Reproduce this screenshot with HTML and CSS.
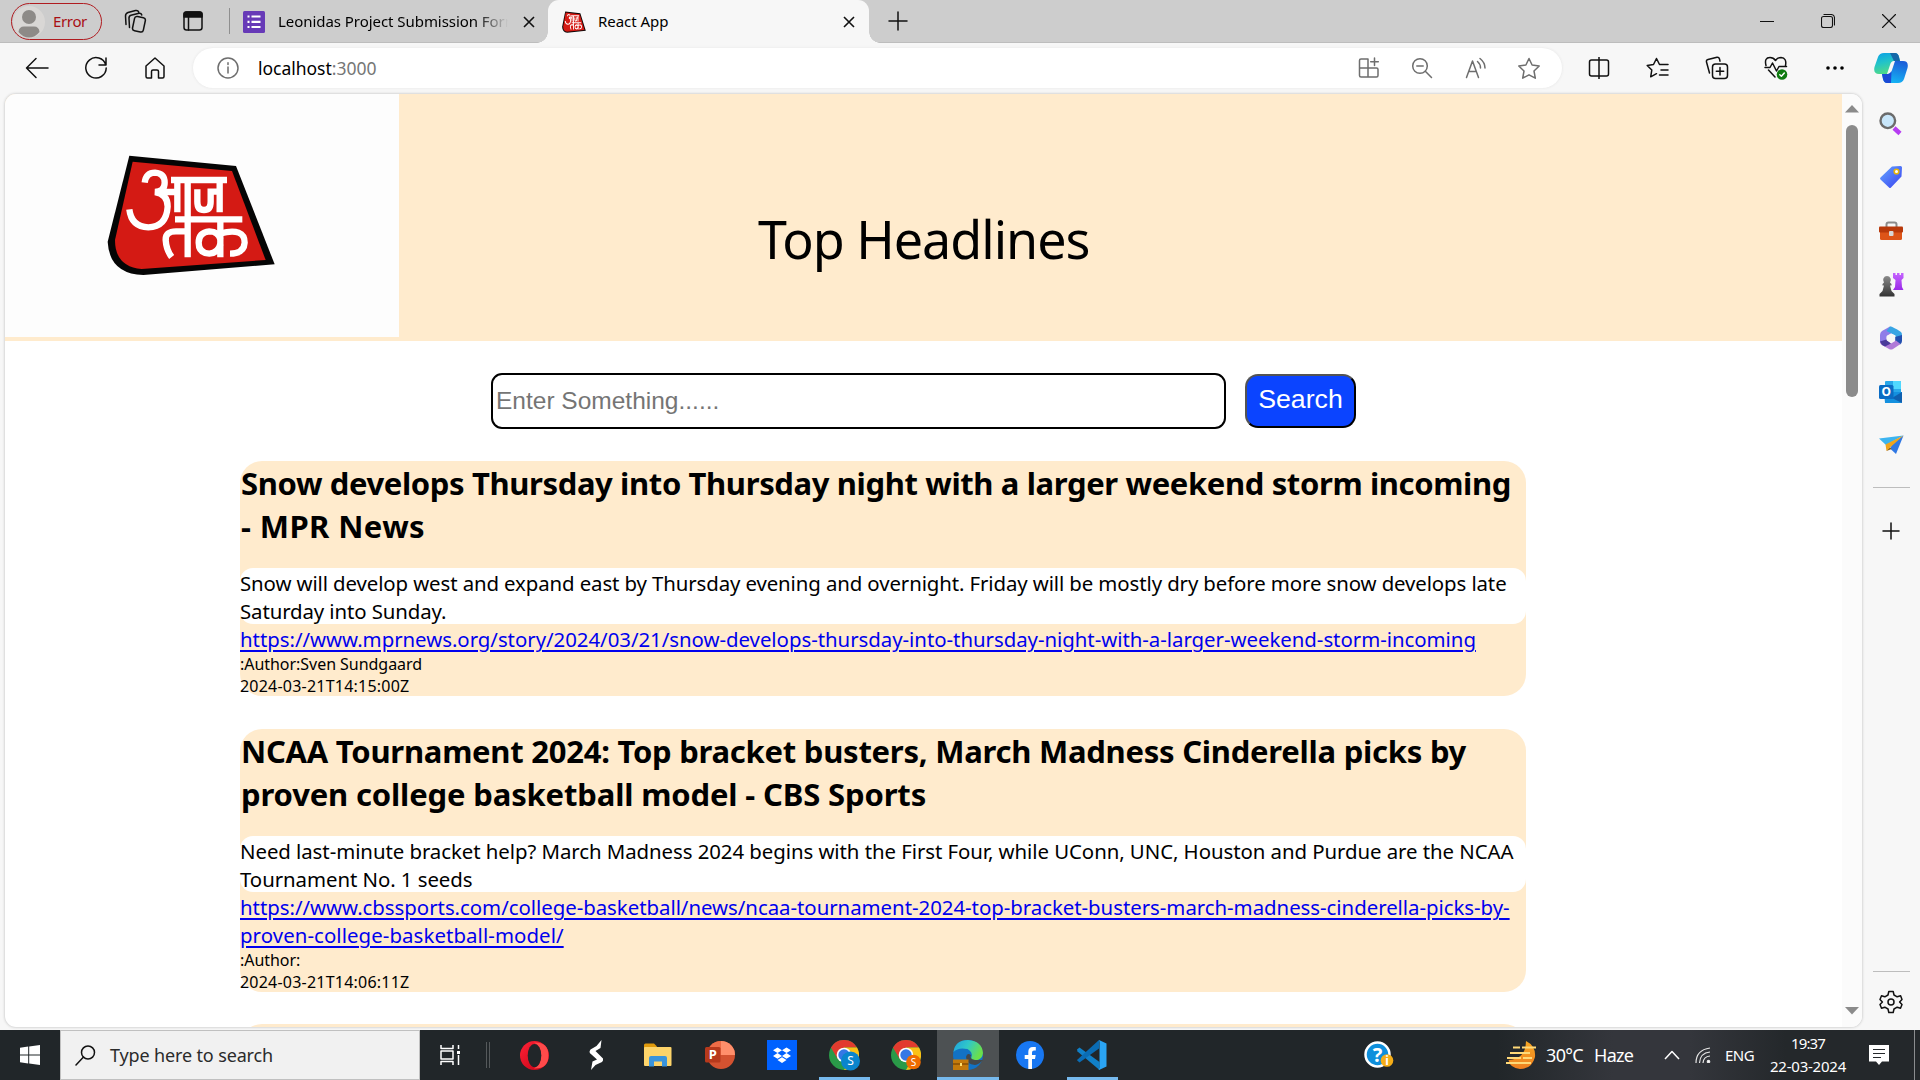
FILE: index.html
```html
<!DOCTYPE html>
<html lang="en">
<head>
<meta charset="utf-8">
<title>React App</title>
<link rel="stylesheet" href="styles.css">
</head>
<body>
<svg class="defs" width="0" height="0" aria-hidden="true">
  <defs>
    <linearGradient id="gBlue" x1="0" y1="0" x2="1" y2="1"><stop offset="0" stop-color="#64a8ff"/><stop offset="1" stop-color="#3a3ff0"/></linearGradient>
    <linearGradient id="gPurple" x1="0" y1="0" x2="0" y2="1"><stop offset="0" stop-color="#c565ff"/><stop offset="1" stop-color="#9b2be8"/></linearGradient>
    <linearGradient id="gGrey" x1="0" y1="0" x2="0" y2="1"><stop offset="0" stop-color="#8a8a8a"/><stop offset="1" stop-color="#333"/></linearGradient>
    <linearGradient id="gCopA" x1="0" y1="0" x2="0.3" y2="1"><stop offset="0" stop-color="#0a9fe8"/><stop offset="0.5" stop-color="#22c3c9"/><stop offset="1" stop-color="#4fd98a"/></linearGradient>
    <linearGradient id="gCopB" x1="0.6" y1="0" x2="0.3" y2="1"><stop offset="0" stop-color="#1b5fd9"/><stop offset="1" stop-color="#15b8f5"/></linearGradient>
    <linearGradient id="gEdge" x1="0" y1="0" x2="1" y2="0.4"><stop offset="0" stop-color="#1e9fe0"/><stop offset="0.5" stop-color="#30c8c8"/><stop offset="1" stop-color="#6be04a"/></linearGradient>
    <linearGradient id="gOpera" x1="0" y1="0" x2="1" y2="1"><stop offset="0" stop-color="#ff2236"/><stop offset="1" stop-color="#c00014"/></linearGradient>
    <linearGradient id="gHaze" x1="0" y1="0" x2="0" y2="1"><stop offset="0" stop-color="#f5a623"/><stop offset="1" stop-color="#f08020"/></linearGradient>
    <symbol id="mark" viewBox="320 190 508 370">
      <path d="M388 197 708 228 824 523 430 555Q328 552 323 455Z" fill="#050505"/>
      <path d="M398 215 696 243 797 510 425 537Q345 530 345 450Z" fill="#d41a14"/>
      <g fill="none" stroke="#fff" stroke-width="19">
        <path d="M434 278Q438 248 465 248 494 250 494 278 494 304 465 306 503 312 503 350 499 411 445 412 394 410 388 358"/>
        <path d="M480 306H532M513 270H681M532 270V367M563 270V502M659 270V367"/>
        <path d="M592 298V335Q592 360 612 360 632 360 632 335V305H659"/>
        <path d="M525 388H727M661 388V502M563 424H528Q496 424 497 450 499 480 515 501"/>
        <path d="M661 448Q655 424 628 424 596 427 596 458 596 489 628 491 655 489 661 462M661 430Q734 412 734 458 732 491 690 491"/>
      </g>
    </symbol>
    <symbol id="chrome" viewBox="0 0 30 30">
      <circle cx="15" cy="15" r="15" fill="#2a9a48"/>
      <path d="M15 15 2 7.5A15 15 0 0 1 28 7.5H15Z" fill="#e23b2e"/>
      <path d="M28 7.5A15 15 0 0 1 15 30L21.5 18.5 15 7.5Z" fill="#fbc116"/>
      <path d="M2 7.500 8.500 18.700 15 15 15 7.500Z" fill="#e23b2e"/>
      <circle cx="15" cy="15" r="7.300" fill="#fff"/><circle cx="15" cy="15" r="5.700" fill="#3578e5"/>
    </symbol>
  </defs>
</svg>

<header class="strip">
  <div class="profile">
    <svg width="34" height="34" viewBox="0 0 34 34"><circle cx="17" cy="17" r="16" fill="#d9d7d5"/><circle cx="17" cy="12" r="7" fill="#8d8a87"/><path d="M6.500 27Q7 21.500 12 21.500H22Q27 21.500 27.500 27 23 32.500 17 32.500T6.500 27Z" fill="#8d8a87"/></svg>
    <span class="profile-name">Error</span>
  </div>
  <div class="cell cell-spaces"><svg width="24" height="24" viewBox="0 0 24 24" class="ln"><rect x="9.500" y="8" width="11" height="14.500" rx="2.500" transform="rotate(12 15 15)"/><path d="M5.500 18.500 5 9.500Q4.800 7 7 6.300L15 4.300Q17.200 4 17.800 6M2 15.500 1.500 7Q1.500 4.500 4 3.500L11.500 1.500Q14 1 14.700 3"/></svg></div>
  <div class="cell cell-tabs"><svg width="20" height="20" viewBox="0 0 20 20" class="ln"><rect x="1" y="1" width="18" height="18" rx="2.500"/><path d="M1 3.500Q1 1 3.500 1H16.500Q19 1 19 3.500V6H1Z" fill="#111"/><path d="M5.500 6V19"/></svg></div>
  <i class="strip-sep"></i>
  <div class="tab">
    <svg width="22" height="22" viewBox="0 0 22 22"><rect width="22" height="22" rx="1.500" fill="#673ab7"/><path d="M4.500 5.500h2M4.500 10.800h2M4.500 16h2M8.500 5.500h9M8.500 10.800h9M8.500 16h9" stroke="#fff" stroke-width="2.200"/></svg>
    <span class="tab-title tab-title-fade">Leonidas Project Submission Form</span>
    <svg class="tab-x" width="12" height="12" viewBox="0 0 12 12"><path d="M1 1 11 11M11 1 1 11"/></svg>
  </div>
  <div class="tab tab-active">
    <svg class="favicon" width="24" height="22" viewBox="320 190 508 370" preserveAspectRatio="none"><use href="#mark" x="320" y="190" width="508" height="370"/></svg>
    <span class="tab-title">React App</span>
    <svg class="tab-x" width="12" height="12" viewBox="0 0 12 12"><path d="M1 1 11 11M11 1 1 11"/></svg>
  </div>
  <div class="cell cell-new"><svg width="20" height="20" viewBox="0 0 20 20" class="ln"><path d="M10 1V19M1 10H19"/></svg></div>
  <div class="window-buttons">
    <div class="cell"><svg width="14" height="14" viewBox="0 0 14 14" class="ln thin"><path d="M0 7.500H14"/></svg></div>
    <div class="cell"><svg width="14" height="14" viewBox="0 0 14 14" class="ln thin"><rect x=".5" y="2.500" width="11" height="11" rx="2"/><path d="M3 .5H10Q13.500 .5 13.500 4V11"/></svg></div>
    <div class="cell"><svg width="14" height="14" viewBox="0 0 14 14" class="ln thin"><path d="M.5 .5 13.500 13.500M13.500 .5 .5 13.500"/></svg></div>
  </div>
</header>

<nav class="toolbar">
  <div class="cell nav-cell"><svg width="24" height="22" viewBox="0 0 24 22" class="ln"><path d="M11 1.500 1.500 11 11 20.500M1.500 11H23"/></svg></div>
  <div class="cell nav-cell"><svg width="24" height="24" viewBox="0 0 24 24" class="ln"><path d="M21.800 9A10.200 10.200 0 1 0 22.200 12M22 2V9H15"/></svg></div>
  <div class="cell nav-cell"><svg width="22" height="24" viewBox="0 0 22 24" class="ln"><path d="M2 10 11 2 20 10V20.500Q20 22 18.500 22H14.500V15.500Q14.500 14 13 14H9Q7.500 14 7.500 15.500V22H3.500Q2 22 2 20.500Z"/></svg></div>
  <div class="address">
    <svg width="22" height="22" viewBox="0 0 22 22" class="ln grey"><circle cx="11" cy="11" r="10"/><path d="M11 10V16M11 5.800V7.600"/></svg>
    <span class="url">localhost<span class="port">:3000</span></span>
    <div class="address-icons">
      <div class="cell"><svg width="22" height="22" viewBox="0 0 22 22" class="ln grey"><path d="M3 2H10V20H3Q1.500 20 1.500 18.500V3.500Q1.500 2 3 2ZM1.500 11H18.500Q20 11 20 12.500V18.500Q20 20 18.500 20H10M16.500 1V8.500M12.700 4.700H20.300"/></svg></div>
      <div class="cell"><svg width="22" height="22" viewBox="0 0 22 22" class="ln grey"><circle cx="9" cy="9" r="7.300"/><path d="M14.300 14.300 20.500 20.500M5.800 9H12.200"/></svg></div>
      <div class="cell"><svg width="22" height="22" viewBox="0 0 22 22" class="ln grey"><path d="M1.500 20.500 7.500 4 13.500 20.500M3.700 14.500H11.300M12.500 4.500Q15.500 7 15.500 11M15 1.500Q20 5.500 20 11"/></svg></div>
      <div class="cell"><svg width="24" height="23" viewBox="0 0 24 23" class="ln grey"><path d="M12 1.500 15.100 8 22.200 9 17 14 18.300 21.200 12 17.800 5.700 21.200 7 14 1.800 9 8.900 8Z"/></svg></div>
    </div>
  </div>
  <div class="cell act-cell first"><svg width="22" height="22" viewBox="0 0 22 22" class="ln"><path d="M8.500 3H3.500Q1.500 3 1.500 5V17Q1.500 19 3.500 19H8.500M13.500 3H18.500Q20.500 3 20.500 5V17Q20.500 19 18.500 19H13.500M11 0V22M8.500 3H13.500M8.500 19H13.500"/></svg></div>
  <div class="cell act-cell"><svg width="24" height="22" viewBox="0 0 24 22" class="ln"><path d="M13.500 7.500 10.500 1.500 7.500 7.500 1.200 8.500 5.800 13 4.700 19.800 10.500 16.700M13.500 7.500H22M15 13H22M13.500 18H22"/></svg></div>
  <div class="cell act-cell"><svg width="24" height="24" viewBox="0 0 24 24" class="ln"><rect x="7.500" y="8" width="15" height="14.500" rx="3"/><path d="M15 11.500V19M11.300 15.300H18.700M4.500 17 1.500 6Q1 4 3 3.500L12 1.200Q14 1 14.500 3L15 5.200"/></svg></div>
  <div class="cell act-cell"><svg width="24" height="24" viewBox="0 0 24 24" class="ln"><path d="M2 9.500Q0 1.500 6 1.500 9.500 1.500 11.500 4.500 13.500 1.500 17 1.500 23 2 21.500 9.500M1 11.500H6L8.500 7 12.500 15 15 10.500H22.500M4.500 14 11 21"/><circle cx="18" cy="18.500" r="5.300" fill="#0f7b10" stroke="none"/><path d="M15.800 18.700 17.400 20.200 20.300 17" stroke="#fff"/></svg></div>
  <div class="cell act-cell"><svg width="20" height="6" viewBox="0 0 20 6"><circle cx="3" cy="3" r="1.800"/><circle cx="10" cy="3" r="1.800"/><circle cx="17" cy="3" r="1.800"/></svg></div>
  <div class="cell copilot"><svg width="34" height="30" viewBox="0 0 34 30"><path d="M10 0H21Q24 0 25 4L26 8H20Q17 8 16 12L13 21H5Q-1 21 .5 14L4 4Q5.500 0 10 0Z" fill="url(#gCopA)"/><path d="M16 0H21Q24 0 25 4L26 8H20Z" fill="#1568a8"/><path d="M24 30H13Q10 30 9 26L8 21H14Q17 21 18 17L21 8H29Q35 8 33.500 15L30 26Q28.500 30 24 30Z" fill="url(#gCopB)"/><path d="M8 21H14Q16 21 17.500 18L17 30H13Q10 30 9 26Z" fill="#1c49d4"/></svg></div>
</nav>

<div class="middle">
  <main class="page">
    <div class="content">
      <section class="banner">
        <svg class="logo" width="394" height="243" viewBox="15 12 1182 729"><rect x="15" y="12" width="1182" height="729" fill="#fdfdfd"/><use href="#mark" x="320" y="190" width="508" height="370"/></svg>
        <h1 class="banner-title">Top Headlines</h1>
      </section>
      <div class="search">
        <input class="search-field" type="text" placeholder="Enter Something......">
        <button class="search-button">Search</button>
      </div>
      <article class="card">
        <h2 class="card-title"><span class="t1">Snow develops Thursday into Thursday night with a larger weekend storm incoming</span><br><span class="t4">- MPR News</span></h2>
        <p class="card-text tight">Snow will develop west and expand east by Thursday evening and overnight. Friday will be mostly dry before more snow develops late<br>Saturday into Sunday.</p>
        <a class="card-link" href="#">https://www.mprnews.org/story/2024/03/21/snow-develops-thursday-into-thursday-night-with-a-larger-weekend-storm-incoming</a>
        <div class="card-meta">:Author:Sven Sundgaard<br><span class="date">2024-03-21T14:15:00Z</span></div>
      </article>
      <article class="card card-second">
        <h2 class="card-title"><span class="t3">NCAA Tournament 2024: Top bracket busters, March Madness Cinderella picks by</span><br><span class="t2">proven college basketball model - CBS Sports</span></h2>
        <p class="card-text">Need last-minute bracket help? March Madness 2024 begins with the First Four, while UConn, UNC, Houston and Purdue are the NCAA<br>Tournament No. 1 seeds</p>
        <a class="card-link" href="#">https://www.cbssports.com/college-basketball/news/ncaa-tournament-2024-top-bracket-busters-march-madness-cinderella-picks-by-<br><span class="link-tail">proven-college-basketball-model/</span></a>
        <div class="card-meta">:Author:<br><span class="date">2024-03-21T14:06:11Z</span></div>
      </article>
      <article class="card card-third"></article>
    </div>
    <div class="scrollbar">
      <svg width="14" height="8" viewBox="0 0 14 8"><path d="M7 0 14 7.500H0Z" fill="#8b8b8b"/></svg>
      <i class="thumb"></i>
      <svg width="14" height="8" viewBox="0 0 14 8"><path d="M7 7.500 14 0H0Z" fill="#8b8b8b"/></svg>
    </div>
  </main>
  <aside class="side">
    <div class="side-cell"><svg width="24" height="24" viewBox="0 0 24 24"><path d="M15 16 21 21.500" stroke="#b63df2" stroke-width="4.500"/><circle cx="8.800" cy="8.800" r="7.300" fill="#c8e6fa" stroke="#6b6b6b" stroke-width="2.400"/></svg></div>
    <div class="side-cell"><svg width="24" height="24" viewBox="0 0 24 24"><path d="M13 1.500 21.500 1Q23 1 23 2.500L22.500 11.500 12 22.500Q11 23.500 10 22.500L1.500 14.500Q.5 13.500 1.500 12.500Z" fill="url(#gBlue)"/><circle cx="17.500" cy="6.500" r="2.300" fill="#fff" stroke="#e8b40a" stroke-width="1.600"/></svg></div>
    <div class="side-cell"><svg width="24" height="20" viewBox="0 0 24 20"><path d="M7.500 6V3.500Q7.500 1.500 9.500 1.500H15.500Q17.500 1.500 17.500 3.500V6" fill="none" stroke="#8b8b8b" stroke-width="2"/><rect x="1" y="9" width="22" height="10" rx="1.500" fill="#dd5418"/><rect y="5.500" width="24" height="6" rx="1" fill="#b8390b"/><rect x="10" y="10" width="4.500" height="5" rx="1" fill="#d8d8d8"/></svg></div>
    <div class="side-cell"><svg width="25" height="25" viewBox="0 0 25 25"><path d="M14 1H16.500V3H18V1H20.500V3H22V1H24.500V6L22.500 8 23 15 24.500 18H14L16 15 16.500 8 14 6Z" fill="url(#gPurple)"/><path d="M8 4A4 4 0 0 1 11 10.500L12.500 12V13.500H11L12.500 19 15.500 22V24.500H.5V22L3.500 19 5 13.500H3.500V12L5 10.500A4 4 0 0 1 8 4Z" fill="url(#gGrey)"/></svg></div>
    <div class="side-cell"><svg width="24" height="24" viewBox="0 0 24 24"><path d="M11 .5 3 5Q1 6.500 1 9V17L7.500 14V10.500L17 4.500Z" fill="#8f7de8"/><path d="M11 .5Q13 0 22 6 23 7 23 9V15L16.500 12V9.500L7.500 5Z" fill="#38a5e4"/><path d="M23 9V15Q23 17.500 21 18.500L16 14.500V11Z" fill="#2350b0"/><path d="M1 16 12 17.500 17 14.500 21.500 18 14 23Q12 24 10 23L3 19Q1 18 1 16Z" fill="#b07ad8"/><path d="M1 15.500 7.500 13.500 12 17.500 6 20.500 3 19Z" fill="#4a3a9a"/><path d="M12 7.500 16.200 9.800V14.500L12 17 7.800 14.500V9.800Z" fill="#f7f7f7"/></svg></div>
    <div class="side-cell"><svg width="24" height="24" viewBox="0 0 24 24"><path d="M6 2Q6 1 7 1H21Q22 1 22 2V14H6Z" fill="#28a8ea"/><path d="M14 1H21Q22 1 22 2V9H14Z" fill="#50d9ff"/><path d="M5 12 23 12V22Q23 23 22 23H6Z" fill="#1490df"/><path d="M23 12 13 18 23 23Z" fill="#0f60b0"/><rect y="5" width="14.500" height="14" rx="1.500" fill="#0a6cc4"/><text x="7.200" y="16.300" text-anchor="middle" class="badge b12">O</text></svg></div>
    <div class="side-cell"><svg width="25" height="20" viewBox="0 0 25 20"><path d="M0 3.500 24.500 .5 7 10Z" fill="#3cb4f0"/><path d="M24.500 .5 17 19 11 13.500 14 8Z" fill="#2f78e4"/><path d="M24.500 .5 6.500 9.500 7.500 16 11 12.500Z" fill="#f0a51c"/><path d="M7.500 16 11 12.500 12.500 14Z" fill="#8a5200"/></svg></div>
    <i class="side-line"></i>
    <svg class="side-plus ln" width="18" height="18" viewBox="0 0 18 18"><path d="M9 1V17M1 9H17"/></svg>
    <div class="side-bottom">
      <i class="side-line"></i>
      <svg width="24" height="24" viewBox="0 0 24 24" class="ln gear"><path d="M9.800 1.500H14.200L15 5 18.200 6.800 21.600 5.800 23 9.500 20.600 12 23 14.500 21.500 18.200 18.200 17.200 15 19 14.200 22.500H9.800L9 19 5.800 17.200 2.500 18.200 1 14.500 3.400 12 1 9.500 2.500 5.800 5.800 6.800 9 5Z"/><circle cx="12" cy="12" r="3"/></svg>
    </div>
  </aside>
</div>

<footer class="taskbar">
  <div class="start"><svg width="20" height="20" viewBox="0 0 20 20" fill="#fff"><path d="M0 2.800 8.200 1.600V9.500H0ZM9.200 1.500 20 0V9.500H9.200ZM0 10.500H8.200V18.400L0 17.200ZM9.200 10.500H20V20L9.200 18.500Z"/></svg></div>
  <div class="task-search"><svg width="21" height="21" viewBox="0 0 21 21" class="ln"><circle cx="13" cy="7.500" r="6.500"/><path d="M8.500 12 1 20"/></svg><span>Type here to search</span></div>
  <div class="cell task-view"><svg width="21" height="20" viewBox="0 0 21 20" class="ln white"><path d="M1 0V3.500H13V0M1 20V16.500H13V20M1 6H13V14H1ZM18.500 0V4M18.500 10V20"/><path d="M17 7.500H20" stroke-width="3"/></svg></div>
  <i class="task-sep"></i>
  <div class="apps">
    <div class="app"><svg width="29" height="29" viewBox="0 0 29 29"><ellipse cx="14.500" cy="14.500" rx="14.500" ry="14.500" fill="url(#gOpera)"/><path d="M14 1.500Q28.500 1 28.500 14.500T14 27.500Q21 24 21 14.500T14 1.500Z" fill="#ff4a4a"/><ellipse cx="14.500" cy="14.500" rx="6.800" ry="11.500" fill="#212629"/></svg></div>
    <div class="app"><svg width="15" height="30" viewBox="0 0 15 30" fill="#fff"><path d="M12.500 0 11.500 8 6.500 11 14 18.500Q14.500 20.500 13 22L6.500 25 2 30 3.500 21.500 8 19.500 .8 13Q0 11 1.500 9.500L7.500 6Z"/></svg></div>
    <div class="app"><svg width="28" height="24" viewBox="0 0 28 24"><path d="M0 2Q0 .5 1.500 .5H10L13 3.500V8H0Z" fill="#e09a0c"/><rect y="4" width="27.500" height="19" rx="1" fill="#fdd46a"/><path d="M5 23.500V15Q5 13 7 13H21Q23 13 23 15V23.500H18V18.500H10V23.500Z" fill="#3a94dc"/></svg></div>
    <div class="app"><svg width="30" height="28" viewBox="0 0 30 28"><circle cx="16" cy="14" r="14" fill="#d35230"/><path d="M16 0A14 14 0 0 0 2 14H16Z" fill="#ed6c47"/><path d="M16 0A14 14 0 0 1 30 14H16Z" fill="#ff8f6b"/><rect y="6" width="15.500" height="15.500" rx="1.500" fill="#b7391c"/><text x="7.700" y="18.300" text-anchor="middle" class="badge b13">P</text></svg></div>
    <div class="app"><svg width="30" height="30" viewBox="0 0 30 30"><rect width="30" height="30" fill="#0061ff"/><path d="M10.500 7.500 15 10.300 10.500 13.100 6 10.300ZM19.500 7.500 24 10.300 19.500 13.100 15 10.300ZM10.500 13.100 15 15.900 10.500 18.700 6 15.900ZM19.500 13.100 24 15.900 19.500 18.700 15 15.900ZM15 17.300 19.500 20.100 15 22.900 10.500 20.100Z" fill="#fff"/></svg></div>
    <div class="app app-running"><svg width="34" height="32" viewBox="-2 -1 34 32"><use href="#chrome" width="30" height="30"/><circle cx="21.500" cy="21" r="9.500" fill="#0a85cc"/><text x="21.500" y="25.300" text-anchor="middle" class="badge b12 light">S</text></svg></div>
    <div class="app"><svg width="34" height="32" viewBox="-2 -1 34 32"><use href="#chrome" width="30" height="30"/><circle cx="22.500" cy="22" r="7.300" fill="#ef6c00"/><text x="22.500" y="25.500" text-anchor="middle" class="badge b10 light">S</text></svg></div>
    <div class="app app-running app-current"><svg width="30" height="30" viewBox="0 0 30 30"><circle cx="15" cy="15" r="15" fill="#1272c4"/><path d="M.5 12Q2 0 15 0 29 1 30 13 29.500 20 22 20.500 17 20.500 18.500 17 20 12 14.500 9 5 7 .5 12Z" fill="url(#gEdge)"/><path d="M30 20H22Q16 19 18 15 14 12 13 17 13.500 24 22 25 26 24.500 30 20Z" fill="#43484b"/><rect y="19.500" width="15.500" height="10.500" fill="#c47a0a"/><path d="M0 24H15.500" stroke="#7a4300" stroke-width="1.200"/><rect x="7" y="23" width="2" height="3" fill="#ffdf6b"/></svg></div>
    <div class="app"><svg width="28" height="28" viewBox="0 0 28 28"><circle cx="14" cy="14" r="14" fill="#1877f2"/><path d="M12.300 28V18H8.700V14H12.300V11Q12.300 6 17 6H19.800V9.500H18Q16 9.500 16 11.500V14H19.700L19 18H16V28Z" fill="#fff"/></svg></div>
    <div class="app app-running"><svg width="30" height="30" viewBox="0 0 30 30"><path d="M0 9.500 2.500 7.500 22.500 22V30L.5 11.500Z" fill="#1180c8"/><path d="M0 20 22 0V8.500L2.500 22.500.5 20.800Z" fill="#0a6cb4"/><path d="M22 0 29.500 3.500V26.500L22 30Q21 29.500 22.500 28V2Z" fill="#2aa4f4"/></svg></div>
  </div>
  <div class="tray">
    <svg class="help" width="30" height="28" viewBox="0 0 30 28"><circle cx="13.500" cy="13.500" r="12" fill="#0e8fdc" stroke="#fff" stroke-width="2.500"/><text x="13.500" y="20.500" text-anchor="middle" class="badge b20">?</text><circle cx="23" cy="19.500" r="6.300" fill="#f5ad17"/><text x="23" y="24" text-anchor="middle" class="badge b11">i</text></svg>
    <svg class="weather" width="30" height="28" viewBox="0 0 30 28"><path d="M20 0Q30 5 29 16 26 28 14 28 4 27 2.500 19 20 18 20 0Z" fill="url(#gHaze)"/><path d="M7 6.500H14M16 6.500H30M4 12H24M1 17H15M17 17H26M0 22H25" stroke="#ffd978" stroke-width="2"/></svg>
    <span class="temp">30°C</span><span class="haze">Haze</span>
    <svg class="chev ln white" width="16" height="10" viewBox="0 0 16 10"><path d="M1 9 8 1.500 15 9"/></svg>
    <svg class="wifi" width="16" height="16" viewBox="0 0 16 16" fill="none" stroke="#e8e8e8" stroke-width="1.200"><path d="M1 16Q1 3 15 1M4.500 16Q5 6 15 5M8 16Q8.500 9.500 15 9"/><circle cx="13.500" cy="14.500" r="1.200" fill="#fff"/></svg>
    <span class="lang">ENG</span>
    <div class="clock"><span class="time">19:37</span><span class="day">22-03-2024</span></div>
    <svg class="notes" width="20" height="20" viewBox="0 0 20 20"><path d="M0 0H20V16.500H13L10 20 7 16.500H0Z" fill="#fff"/><path d="M4 4.500H16M4 8.500H16M4 12.500H12" stroke="#25292c" stroke-width="1.200"/></svg>
    <i class="peek"></i>
  </div>
</footer>
</body>
</html>
```
FILE: styles.css
```css
* { box-sizing: border-box; }
body {
  margin: 0; width: 1920px; height: 1080px; overflow: hidden;
  display: flex; flex-direction: column;
  background: #f7f7f7; color: #000;
  font-family: "Noto Sans", "Open Sans", sans-serif;
}
svg { display: block; flex: none; }
.defs { position: absolute; }
.cell { display: flex; align-items: center; justify-content: center; flex: none; }
.ln { fill: none; stroke: #111; stroke-width: 1.5; stroke-linejoin: round; stroke-linecap: round; }
.thin { stroke-width: 1.1; }
.grey { stroke: #6e6e6e; }
.white { stroke: #fff; stroke-linecap: butt; }
.badge { font-family: "Noto Sans", sans-serif; font-weight: 700; fill: #fff; }
.light { font-weight: 400; }
.b10 { font-size: 10px; } .b11 { font-size: 12px; } .b12 { font-size: 12px; } .b13 { font-size: 13px; } .b20 { font-size: 20px; }

/* tab strip */
.strip { height: 43px; flex: none; display: flex; background: #cdcdcd; border-bottom: 1px solid #bdbdbd; }
.profile { margin: 3px 0 0 11px; width: 91px; height: 37px; border: 1.5px solid #b01c20; border-radius: 19px; display: flex; align-items: center; }
.profile-name { margin-left: 7px; padding-bottom: 2px; font-size: 15px; letter-spacing: -.35px; color: #a80f14; }
.cell-spaces { width: 68px; }
.cell-tabs { width: 45px; }
.strip-sep { width: 1px; height: 26px; margin: 8px 13px 0 14px; background: #8f8f8f; }
.tab { width: 305px; height: 43px; flex: none; display: flex; align-items: center; }
.tab-title { flex: 1; margin-left: 13px; padding-bottom: 2px; font-size: 15px; white-space: nowrap; letter-spacing: -.05px; }
.tab-title-fade { width: 230px; flex: none; overflow: hidden; -webkit-mask-image: linear-gradient(90deg, #000 86%, transparent 100%); mask-image: linear-gradient(90deg, #000 86%, transparent 100%); }
.tab-x { margin-left: auto; margin-right: 13px; fill: none; stroke: #111; stroke-width: 1.6; }
.tab-active { position: relative; width: 321px; background: #f7f7f7; border-radius: 11px 11px 0 0; padding-left: 14px; }
.tab-active::before, .tab-active::after { content: ""; position: absolute; bottom: 0; width: 11px; height: 11px; }
.tab-active::before { left: -11px; background: radial-gradient(circle at 0 0, transparent 10.5px, #f7f7f7 11px); }
.tab-active::after { right: -11px; background: radial-gradient(circle at 100% 0, transparent 10.5px, #f7f7f7 11px); }
.tab-active .tab-title { margin-left: 12px; }
.tab-active .tab-x { margin-right: 14px; }
.cell-new { width: 58px; height: 42px; }
.window-buttons { margin-left: auto; margin-right: 1px; display: flex; }
.window-buttons .cell { width: 61px; }

/* toolbar */
.toolbar { height: 51px; flex: none; display: flex; align-items: center; padding: 0 0 1px 7px; }
.nav-cell { width: 59px; }
.address { width: 1369px; height: 40px; margin-left: 9px; border-radius: 20px; background: #fff; box-shadow: 0 0 3px #e4e4e4; display: flex; align-items: center; padding-left: 24px; }
.url { margin-left: 19px; font-size: 17.5px; letter-spacing: -.02px; }
.port { color: #767676; }
.address-icons { margin-left: auto; margin-right: 6px; display: flex; }
.address-icons .cell { width: 53.5px; }
.act-cell { width: 59px; }
.act-cell.first { margin-left: 7px; }
.copilot { width: 54px; }

/* page */
.middle { height: 936px; flex: none; display: flex; padding-left: 5px; }
.page { width: 1857px; height: 933px; display: flex; background: #fff; border-radius: 11px; overflow: hidden; box-shadow: 0 0 3px #b5b5b5; }
.content { width: 1837px; height: 933px; overflow: hidden; }
.banner { height: 247px; background: #ffebcd; display: flex; }
.banner-title { margin: 110px 0 0 359px; font-size: 52px; font-weight: 400; line-height: 70px; letter-spacing: -1px; white-space: nowrap; }
.search { display: flex; margin: 32px 0 0 486px; height: 56px; }
.search-field { width: 735px; height: 56px; margin: 0; border: 2px solid #000; border-radius: 11px; padding: 1px 3px; font: 24.5px "Liberation Sans", sans-serif; background: #fff; }
.search-field::placeholder { color: #757575; opacity: 1; }
.search-button { width: 111px; height: 54px; margin: 1px 0 0 19px; padding: 0 0 3px; border: 2px outset #000; border-radius: 13px; background: #0b44ff; color: #fff; font: 26.7px "Liberation Sans", sans-serif; }
.card { width: 1286px; height: 235px; margin: 32px 0 0 235px; border-radius: 22px; background: #ffebcd; white-space: nowrap; }
.card-second { height: 263px; margin-top: 33px; }
.card-title { margin: 0; padding: 1px 0 0 1px; height: 107px; font-size: 31px; line-height: 43.2px; }
.t1 { letter-spacing: -.37px; }
.t2 { letter-spacing: -.15px; }
.t3 { letter-spacing: -.25px; }
.t4 { letter-spacing: .4px; }
.card-text { margin: 0; padding-top: 1px; height: 56px; background: #fff; border-radius: 13px; font-size: 20.4px; line-height: 28px; letter-spacing: -.06px; }
.tight { letter-spacing: -.105px; }
.card-link { display: block; padding-top: 1px; margin-bottom: -1px; font-size: 20.4px; line-height: 28px; letter-spacing: -.032px; color: #0000ee; text-decoration: underline; text-decoration-thickness: 2px; text-underline-offset: 3px; text-decoration-skip-ink: auto; }
.link-tail { letter-spacing: .08px; }
.card-meta { padding-top: 1px; font-size: 16px; line-height: 22px; letter-spacing: -.04px; }
.date { letter-spacing: .22px; }
.scrollbar { width: 20px; background: #fbfbfb; display: flex; flex-direction: column; align-items: center; padding: 11px 0 12px; }
.thumb { width: 12px; height: 272px; margin: 12px 0 auto; border-radius: 6px; background: #8b8b8b; }

/* sidebar */
.side { width: 58px; height: 936px; padding-top: 3px; display: flex; flex-direction: column; align-items: center; }
.side-cell { height: 53.6px; flex: none; display: flex; align-items: center; }
.side-line { width: 37px; height: 1px; flex: none; margin-top: 15px; background: #bdbdbd; }
.side-plus { margin-top: 34px; }
.side-bottom { margin-top: auto; padding-bottom: 16px; display: flex; flex-direction: column; align-items: center; }
.gear { margin-top: 18px; }

/* taskbar */
.taskbar { height: 50px; flex: none; display: flex; background: linear-gradient(90deg, #212629 0 78%, #34363c 84% 88%, #24282b 93%); color: #fff; }
.start { width: 60px; flex: none; display: flex; align-items: center; justify-content: center; }
.task-search { width: 360px; flex: none; background: #f1f1f1; border: 1px solid #c0c0c0; display: flex; align-items: center; padding-left: 14px; color: #2b2b2b; font-size: 18px; letter-spacing: -.14px; }
.task-search span { margin-left: 14px; }
.task-view { width: 61px; }
.task-sep { width: 4px; height: 26px; flex: none; margin: 12px 0 0 5px; border: solid #55595b; border-width: 0 1px; }
.apps { display: flex; flex: none; margin-left: 13px; }
.app { width: 62px; height: 50px; display: flex; align-items: center; justify-content: center; }
.app-running { background: linear-gradient(#76b9ed, #76b9ed) center bottom / 51px 3px no-repeat; }
.app-current { background: linear-gradient(#76b9ed, #76b9ed) center bottom / 62px 3px no-repeat #4d5153; }
.tray { flex: 1; display: flex; align-items: center; white-space: nowrap; font-size: 18px; }
.help { margin-left: 241px; }
.weather { margin-left: 112px; }
.temp { width: 38px; margin-left: 10px; letter-spacing: -.65px; }
.haze { width: 40px; margin-left: 10px; letter-spacing: -.7px; }
.chev { margin-left: 30px; }
.wifi { margin-left: 15px; }
.lang { width: 29px; margin-left: 14px; font-size: 15px; letter-spacing: -.55px; }
.clock { width: 78px; margin-left: 15px; display: flex; flex-direction: column; align-items: center; font-size: 15px; line-height: 23px; }
.time { letter-spacing: -.85px; }
.day { letter-spacing: -.23px; }
.notes { margin-left: 22px; }
.peek { width: 1px; height: 50px; margin-left: 25px; background: #8b8d8f; }
```
